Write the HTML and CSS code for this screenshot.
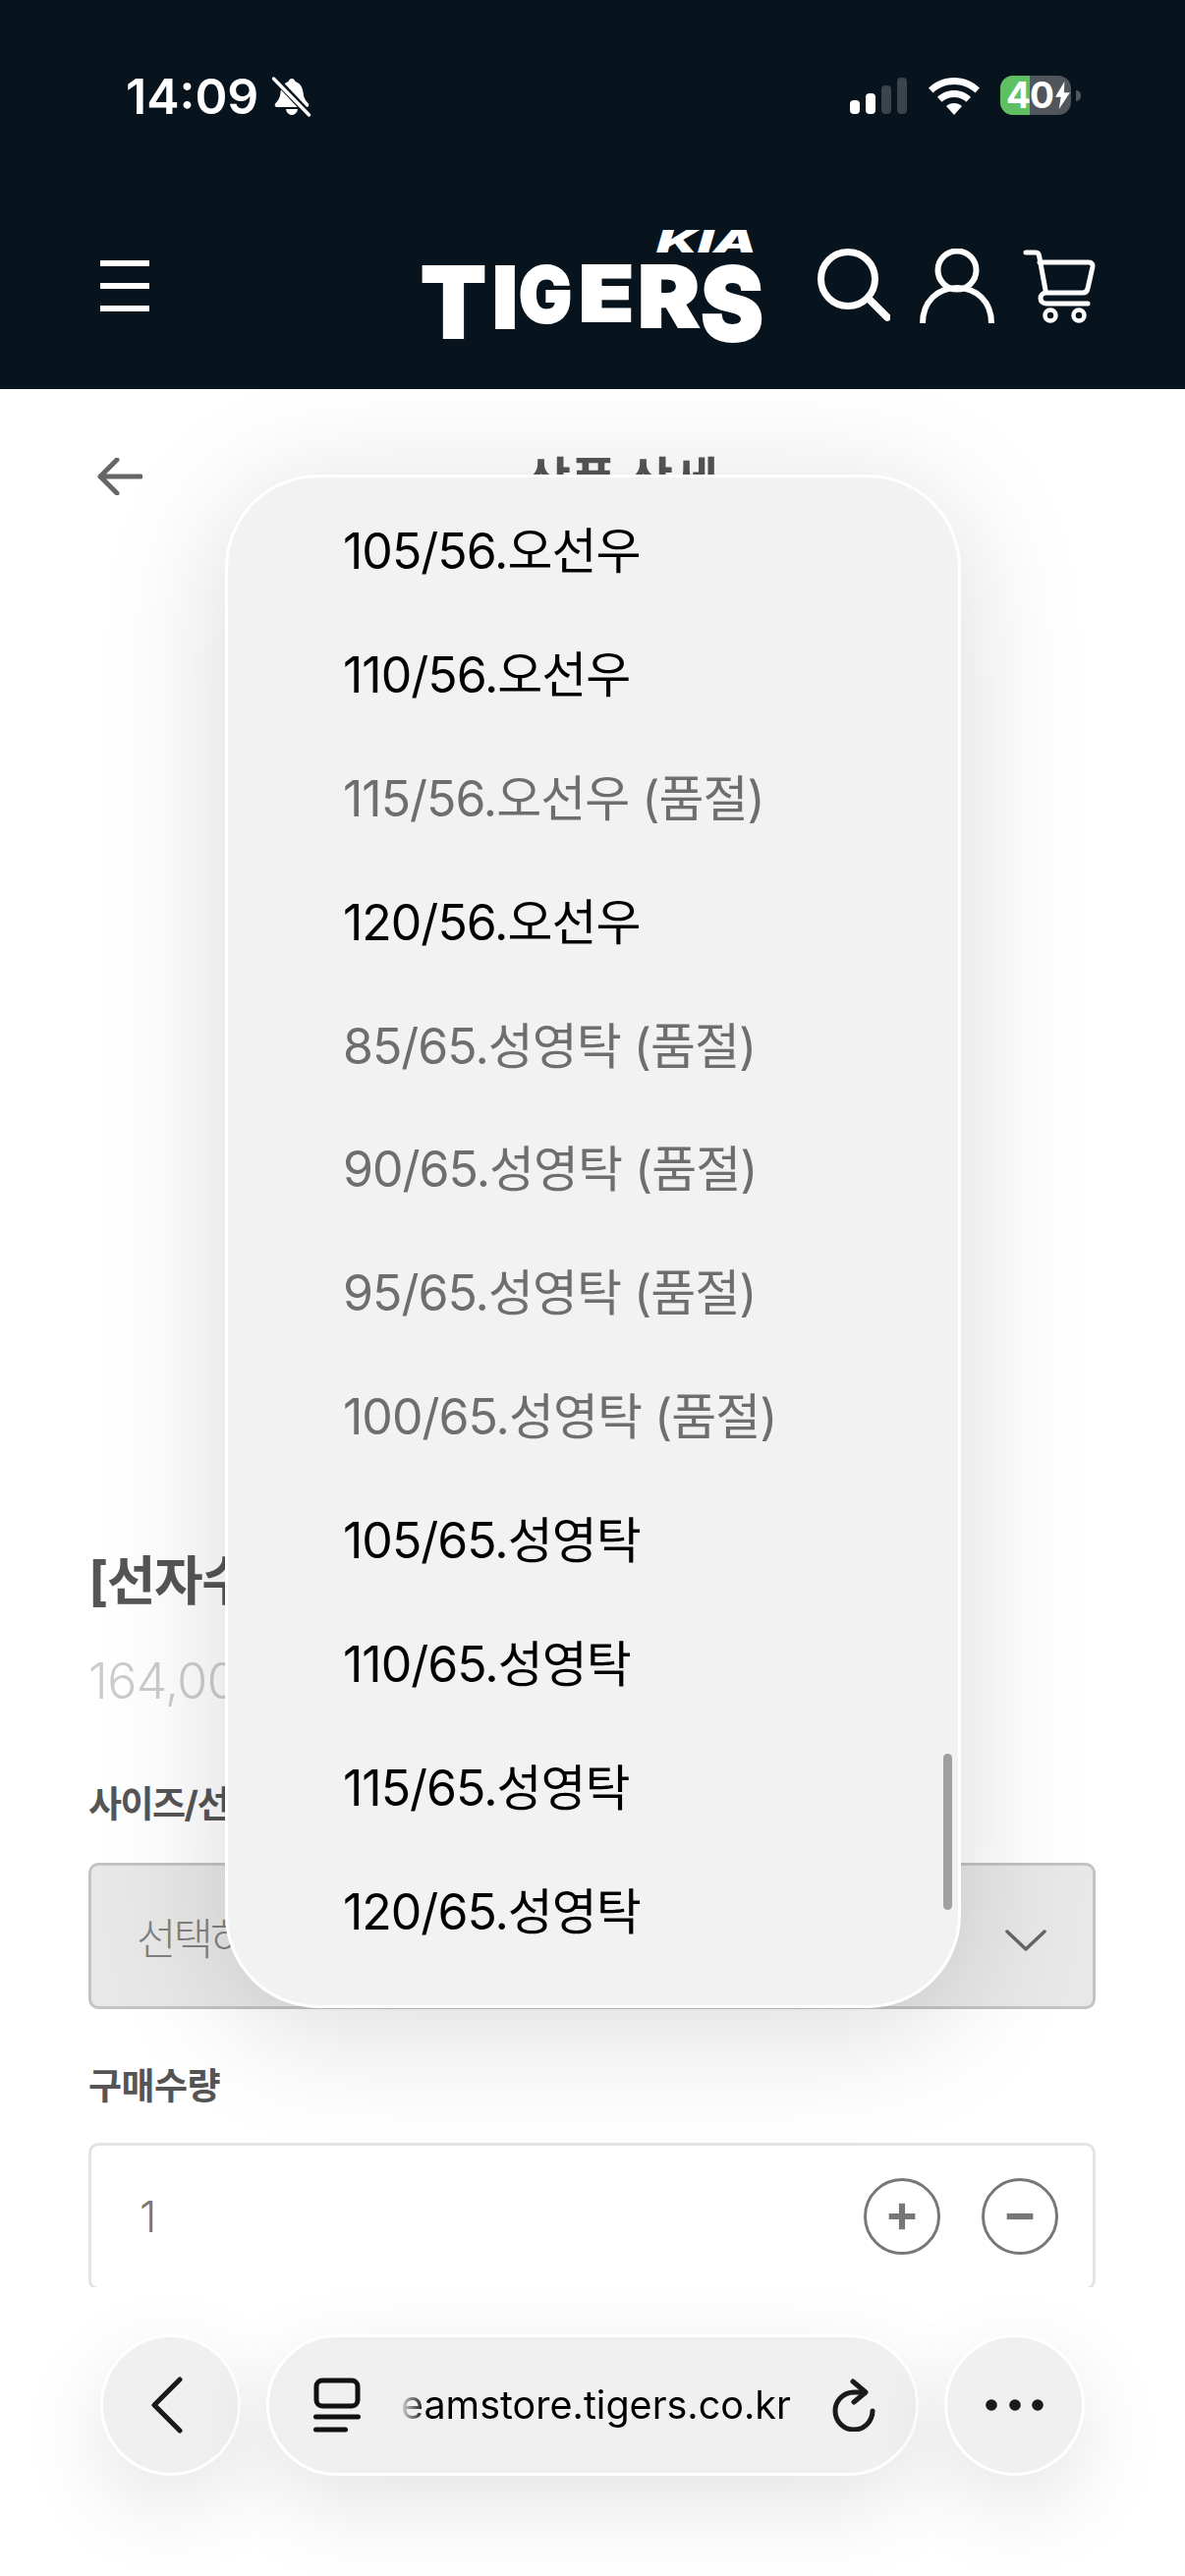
FILE: index.html
```html
<!DOCTYPE html>
<html lang="ko">
<head>
<meta charset="utf-8">
<title>상품 상세</title>
<link rel="stylesheet" href="styles.css">
</head>
<body>
<div class="page">
  <header class="top">
    <div class="status">
      <div class="status-left">
        <span class="time">14:09</span>
        <svg class="bell" viewBox="0 0 40 42"><path d="M20 3c2 0 3 1.500 3.500 3 5 1.500 7.500 6 8 11 .4 5 2 8 5 11 1.500 1.700.8 4-1.500 4H5c-2.300 0-3-2.300-1.500-4 3-3 4.600-6 5-11 .5-5 3-9.500 8-11C17 4.500 18 3 20 3zM14 34h12c-.5 3.500-3 6-6 6s-5.500-2.500-6-6z" fill="#fff"/><path d="M2 2l36 38" stroke="#07141e" stroke-width="7"/><path d="M1.500 3l36 37" stroke="#fff" stroke-width="3.400" stroke-linecap="round"/></svg>
      </div>
      <div class="status-right">
        <div class="signal"><i class="bar b1"></i><i class="bar b2"></i><i class="bar b3"></i><i class="bar b4"></i></div>
        <svg class="wifi" viewBox="0 0 52 38"><path d="M26 0c10 0 19 4 26 10.500L47.500 15.500C41.800 10.200 34.300 7 26 7S10.200 10.200 4.500 15.500L0 10.500C7 4 16 0 26 0z" fill="#fff"/><path d="M26 13c6.500 0 12.500 2.500 17 6.800l-4.500 5C35.200 21.800 30.800 20 26 20s-9.200 1.800-12.500 4.800l-4.500-5C13.500 15.500 19.500 13 26 13z" fill="#fff"/><path d="M26 26c3 0 5.800 1.100 8 3L26 38l-8-9c2.200-1.900 5-3 8-3z" fill="#fff"/></svg>
        <div class="battery"><span class="battery-fill"></span><span class="battery-text">40</span><svg class="bolt" viewBox="0 0 16 30"><path d="M10 0L0 17h6l-2 13L16 12H9.500z" fill="#fff"/></svg></div>
        <i class="nub"></i>
      </div>
    </div>
    <nav class="nav">
      <div class="burger"><i></i><i></i><i></i></div>
      <svg class="logo" viewBox="0 0 352 116" role="img" aria-label="KIA TIGERS">
        <g class="logo-text">
          <text class="kia" x="240" y="24" textLength="102" lengthAdjust="spacingAndGlyphs">KIA</text>
          <text x="0" y="111" font-size="100" textLength="67" lengthAdjust="spacingAndGlyphs">T</text>
          <text x="73" y="101" font-size="87" textLength="26" lengthAdjust="spacingAndGlyphs">I</text>
          <text x="100" y="95" font-size="79" textLength="54" lengthAdjust="spacingAndGlyphs">G</text>
          <text x="161" y="94" font-size="78" textLength="56" lengthAdjust="spacingAndGlyphs">E</text>
          <text x="221" y="100" font-size="86" textLength="63" lengthAdjust="spacingAndGlyphs">R</text>
          <text x="285" y="114" font-size="105" textLength="64" lengthAdjust="spacingAndGlyphs">S</text>
        </g>
      </svg>
      <div class="nav-icons">
        <svg class="ic-search" viewBox="0 0 74 74"><circle cx="31" cy="31" r="27.500" fill="none" stroke="#fff" stroke-width="7"/><path d="M52 51l19 19" stroke="#fff" stroke-width="7.500" stroke-linecap="round"/></svg>
        <svg class="ic-user" viewBox="0 0 76 76"><circle cx="38" cy="22" r="19.500" fill="none" stroke="#fff" stroke-width="6"/><path d="M3 76c0-22 15-36 35-36s35 14 35 36" fill="none" stroke="#fff" stroke-width="6"/></svg>
        <svg class="ic-cart" viewBox="0 0 76 76"><path d="M3 4h10c2 0 3 1 3.500 3l7 38M17 14h50c3 0 4.500 2 4 4.500l-5 22c-.5 3-2.500 4.500-5 4.500H24c-8 0-8 11 0 11h42" fill="none" stroke="#fff" stroke-width="5" stroke-linecap="round" stroke-linejoin="round"/><circle cx="28" cy="68" r="5.500" fill="none" stroke="#fff" stroke-width="4.500"/><circle cx="57" cy="68" r="5.500" fill="none" stroke="#fff" stroke-width="4.500"/></svg>
      </div>
    </nav>
  </header>

  <main class="content">
    <div class="subhead">
      <svg class="arrow" viewBox="0 0 46 38"><path d="M20 2L3 19l17 17M3 19h41" fill="none" stroke="#666" stroke-width="5" stroke-linecap="round" stroke-linejoin="round"/></svg>
      <h1 class="subhead-title">상품 상세</h1>
    </div>
    <section class="form">
      <h2 class="product">[선자수용 유니폼]</h2>
      <p class="price">164,000원</p>
      <h3 class="label label-size">사이즈/선수</h3>
      <div class="select">
        <span>선택하세요</span>
        <svg class="chev" viewBox="0 0 42 22"><path d="M2 2l19 18L40 2" fill="none" stroke="#666" stroke-width="3.500" stroke-linecap="round" stroke-linejoin="round"/></svg>
      </div>
      <h3 class="label label-qty">구매수량</h3>
      <div class="qty">
        <span class="qty-num">1</span>
        <div class="qty-btns">
          <span class="round"><svg viewBox="0 0 36 36"><path d="M18 3v30M3 18h30" stroke="#777" stroke-width="7"/></svg></span>
          <span class="round"><svg viewBox="0 0 36 36"><path d="M3 18h30" stroke="#777" stroke-width="7"/></svg></span>
        </div>
      </div>
    </section>
  </main>

  <div class="popup">
    <ul class="options">
      <li>105/56.오선우</li>
      <li>110/56.오선우</li>
      <li class="off">115/56.오선우 (품절)</li>
      <li>120/56.오선우</li>
      <li class="off">85/65.성영탁 (품절)</li>
      <li class="off">90/65.성영탁 (품절)</li>
      <li class="off">95/65.성영탁 (품절)</li>
      <li class="off">100/65.성영탁 (품절)</li>
      <li>105/65.성영탁</li>
      <li>110/65.성영탁</li>
      <li>115/65.성영탁</li>
      <li>120/65.성영탁</li>
    </ul>
    <i class="scroll"></i>
  </div>

  <div class="toolbar">
    <div class="tb-btn">
      <svg class="tb-back" viewBox="0 0 34 58"><path d="M30 3L4 29l26 26" fill="none" stroke="#1a1a1a" stroke-width="5" stroke-linecap="round" stroke-linejoin="round"/></svg>
    </div>
    <div class="tb-url">
      <svg class="tb-tabs" viewBox="0 0 48 56"><rect x="3" y="3" width="42" height="26" rx="6" fill="none" stroke="#111" stroke-width="5"/><path d="M2.500 40h43M2.500 53h30" stroke="#111" stroke-width="5" stroke-linecap="round"/></svg>
      <span class="url">eamstore.tigers.co.kr</span>
      <svg class="tb-reload" viewBox="0 0 46 54"><path d="M42 33a19 19 0 1 1-19-19h11" fill="none" stroke="#1a1a1a" stroke-width="5" stroke-linecap="round"/><path d="M22 3l13 11-12 10" fill="none" stroke="#1a1a1a" stroke-width="5" stroke-linecap="round" stroke-linejoin="round"/></svg>
    </div>
    <div class="tb-btn">
      <svg class="tb-dots" viewBox="0 0 60 12"><circle cx="6" cy="6" r="5.800" fill="#1a1a1a"/><circle cx="30" cy="6" r="5.800" fill="#1a1a1a"/><circle cx="53" cy="6" r="5.800" fill="#1a1a1a"/></svg>
    </div>
  </div>
</div>
</body>
</html>
```

FILE: styles.css
```css
* { box-sizing: border-box; }
html, body { margin: 0; padding: 0; background: #fff; }
body { font-family: "Inter", "Noto Sans CJK KR", sans-serif; }
.page { position: relative; width: 1206px; height: 2622px; overflow: hidden; background: #fff; }

.top { position: relative; z-index: 1; height: 396px; background: #07141e; color: #fff; }
.status { display: flex; justify-content: space-between; align-items: flex-start; height: 233px; padding: 77px 106px 0 128px; }
.status-left { display: flex; align-items: center; gap: 14px; }
.time { font-size: 50px; font-weight: 600; line-height: 41px; letter-spacing: 0; }
.bell { width: 40px; height: 42px; }
.status-right { display: flex; align-items: flex-start; width: 235px; position: relative; }
.signal { display: flex; align-items: flex-end; gap: 6px; height: 37px; margin-top: 2px; }
.bar { display: block; width: 10px; border-radius: 4px; background: #3b434b; }
.b1 { height: 14px; background: #fff; }
.b2 { height: 21px; background: #fff; }
.b3 { height: 29px; }
.b4 { height: 37px; }
.wifi { width: 52px; height: 38px; margin: 2px 0 0 22px; }
.battery { position: relative; display: flex; align-items: center; width: 72px; height: 40px; margin-left: 21px; border-radius: 13px; background: #50565c; }
.battery-fill { position: absolute; left: 0; top: 0; bottom: 0; width: 30px; border-radius: 13px 0 0 13px; background: #5fc063; }
.battery-text { position: relative; padding-left: 6px; font-size: 37px; font-weight: 700; color: #fff; line-height: 40px; letter-spacing: -1px; }
.bolt { position: relative; width: 15px; height: 28px; margin-left: 2px; }
.nub { display: block; width: 5px; height: 11px; margin: 15px 0 0 5px; border-radius: 0 5px 5px 0; background: #50565c; }

.nav { display: flex; align-items: flex-start; height: 163px; padding-left: 102px; }
.burger { display: flex; flex-direction: column; gap: 17px; width: 50px; margin-top: 32px; }
.burger i { display: block; height: 6px; background: #fff; }
.logo { width: 352px; height: 116px; margin: 0 0 0 276px; overflow: visible; }
.logo-text { fill: #fff; stroke: #fff; stroke-width: 2px; font-family: "Inter", sans-serif; font-weight: 900; }
.kia { font-size: 32px; font-style: italic; font-weight: 900; stroke-width: 0; }
.nav-icons { display: flex; align-items: flex-start; margin-left: 52px; margin-top: 20px; }
.ic-search { width: 74px; height: 74px; }
.ic-user { width: 76px; height: 76px; margin-left: 30px; }
.ic-cart { width: 76px; height: 76px; margin-left: 29px; }

.content { height: 1932px; overflow: hidden; }
.subhead { position: relative; display: flex; justify-content: center; align-items: center; height: 180px; padding: 6px 0 0 60px; }
.arrow { position: absolute; left: 99px; top: 70px; width: 46px; height: 38px; }
.subhead-title { margin: 0; font-size: 50px; font-weight: 700; color: #555; line-height: 60px; }

.form { padding: 999px 91px 0 90px; }
.product { margin: 0; font-size: 54px; font-weight: 700; color: #555; line-height: 70px; white-space: nowrap; letter-spacing: -1.500px; }
.price { margin: 36px 0 0; font-size: 50px; font-weight: 300; color: #ccc; line-height: 60px; letter-spacing: -.500px; }
.label { margin: 0; font-size: 37px; font-weight: 700; color: #555; line-height: 50px; letter-spacing: -.500px; }
.label-size { margin-top: 71px; letter-spacing: -1.500px; }
.label-qty { margin-top: 54px; }
.select { display: flex; justify-content: space-between; align-items: center; height: 149px; margin-top: 34px; padding: 0 50px 0 46px; border: 3px solid #c4c4c4; border-radius: 10px; background: #e8e8e8; font-size: 44px; font-weight: 300; color: #808080; letter-spacing: -3px; }
.chev { width: 42px; height: 22px; margin: 8px -3px 0 0; }
.qty { display: flex; justify-content: space-between; align-items: center; height: 150px; margin-top: 32px; padding: 0 35px 0 49px; border: 3px solid #e4e4e4; border-radius: 10px; font-weight: 300; font-size: 44px; color: #777; }
.qty-btns { display: flex; gap: 42px; }
.round { display: flex; align-items: center; justify-content: center; width: 78px; height: 78px; border: 3px solid #777; border-radius: 50%; }
.round svg { width: 32px; height: 32px; }

.popup { position: absolute; left: 229px; top: 483px; width: 749px; height: 1561px; padding-top: 8px; border: 3px solid #fff; border-radius: 95px; background: #f2f2f2; box-shadow: 0 20px 130px rgba(0, 0, 0, .15); overflow: hidden; }
.options { list-style: none; margin: 0; padding: 0 0 0 117px; }
.options li { display: flex; align-items: center; height: 125.900px; font-size: 50px; color: #000; white-space: nowrap; letter-spacing: -1px; }
.options .off { color: #6e6e6e; }
.scroll { position: absolute; left: 728px; top: 1299px; width: 9px; height: 159px; border-radius: 5px; background: #a0a0a0; }

.toolbar { position: absolute; left: 102px; top: 2376px; display: flex; gap: 26px; }
.tb-btn, .tb-url { display: flex; align-items: center; height: 144px; border: 3px solid #fff; background: #f0f0f0; box-shadow: 0 30px 90px rgba(0, 0, 0, .11); }
.tb-btn { justify-content: center; width: 143px; border-radius: 50%; }
.tb-url { width: 664px; border-radius: 72px; padding-left: 45px; }
.tb-back { width: 34px; height: 58px; margin-right: 8px; }
.tb-tabs { width: 48px; height: 56px; }
.url { margin-left: 41px; width: 396px; font-size: 39.500px; font-weight: 400; color: #000; white-space: nowrap; -webkit-mask-image: linear-gradient(to right, rgba(0,0,0,.1), #000 26px); mask-image: linear-gradient(to right, rgba(0,0,0,.1), #000 26px); }
.tb-reload { width: 46px; height: 54px; margin-left: 42px; }
.tb-dots { width: 60px; height: 12px; }
```
